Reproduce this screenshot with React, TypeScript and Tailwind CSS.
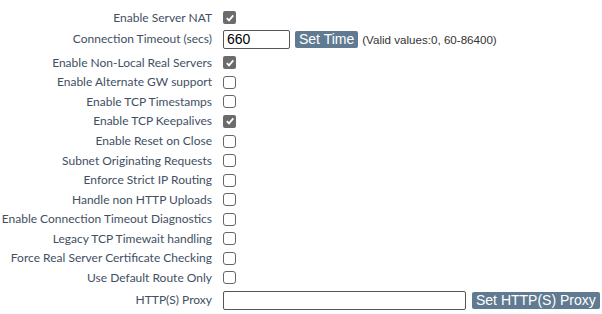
import React from 'react';

const rows: { label: string; checked: boolean }[] = [
  { label: 'Enable Non-Local Real Servers', checked: true },
  { label: 'Enable Alternate GW support', checked: false },
  { label: 'Enable TCP Timestamps', checked: false },
  { label: 'Enable TCP Keepalives', checked: true },
  { label: 'Enable Reset on Close', checked: false },
  { label: 'Subnet Originating Requests', checked: false },
  { label: 'Enforce Strict IP Routing', checked: false },
  { label: 'Handle non HTTP Uploads', checked: false },
  { label: 'Enable Connection Timeout Diagnostics', checked: false },
  { label: 'Legacy TCP Timewait handling', checked: false },
  { label: 'Force Real Server Certificate Checking', checked: false },
  { label: 'Use Default Route Only', checked: false },
];

const Check: React.FC<{ checked: boolean }> = ({ checked }) =>
  checked ? (
    <span className="flex h-[13px] w-[13px] items-center justify-center rounded-[2px] bg-[#6b6b6b]">
      <svg width="10" height="10" viewBox="0 0 10 10">
        <path d="M1.8 5.2 L4 7.4 L8.3 2.4" fill="none" stroke="#fff" strokeWidth="1.8" />
      </svg>
    </span>
  ) : (
    <span className="block h-[13px] w-[13px] rounded-[3px] border border-[#666] bg-white" />
  );

const Label: React.FC<{ children: React.ReactNode }> = ({ children }) => (
  <div className="w-[212px] shrink-0 whitespace-nowrap text-right">{children}</div>
);

const App: React.FC = () => {
  return (
    <div className="min-h-[314px] w-[602px] bg-white pt-[8px] font-['Lato',sans-serif] text-[12px] text-[#424f63]">
      {/* Server NAT */}
      <div className="flex h-[19.55px] items-center gap-[11px]">
        <Label>Enable Server NAT</Label>
        <Check checked />
      </div>

      {/* Connection timeout */}
      <div className="flex h-[25.5px] items-center gap-[11px] pb-[2px]">
        <Label>Connection Timeout (secs)</Label>
        <div className="flex items-center font-['Liberation_Sans',Arial,sans-serif]">
          <input
            readOnly
            value="660"
            className="h-[19px] w-[67px] rounded-[2px] border border-[#555] px-[3px] text-[14px] text-black outline-none"
          />
          <button className="ml-[5px] h-[17px] rounded-[2px] bg-[#607b91] px-[4px] text-[14px] leading-[17px] text-white">
            Set Time
          </button>
          <span className="ml-[4px] text-[11.6px] text-[#333]">(Valid values:0, 60-86400)</span>
        </div>
      </div>

      {rows.map((r) => (
        <div key={r.label} className="flex h-[19.55px] items-center gap-[11px]">
          <Label>{r.label}</Label>
          <Check checked={r.checked} />
        </div>
      ))}

      {/* Proxy */}
      <div className="mt-[3px] flex h-[19px] items-center gap-[11px]">
        <Label>HTTP(S) Proxy</Label>
        <div className="flex items-center font-['Liberation_Sans',Arial,sans-serif]">
          <input
            readOnly
            value=""
            className="h-[19px] w-[243px] rounded-[2px] border border-[#555] px-[3px] text-[14px] text-black outline-none"
          />
          <button className="ml-[6px] h-[17px] rounded-[2px] bg-[#607b91] px-[4px] text-[14px] leading-[17px] text-white">
            Set HTTP(S) Proxy
          </button>
        </div>
      </div>
    </div>
  );
};

export default App;
